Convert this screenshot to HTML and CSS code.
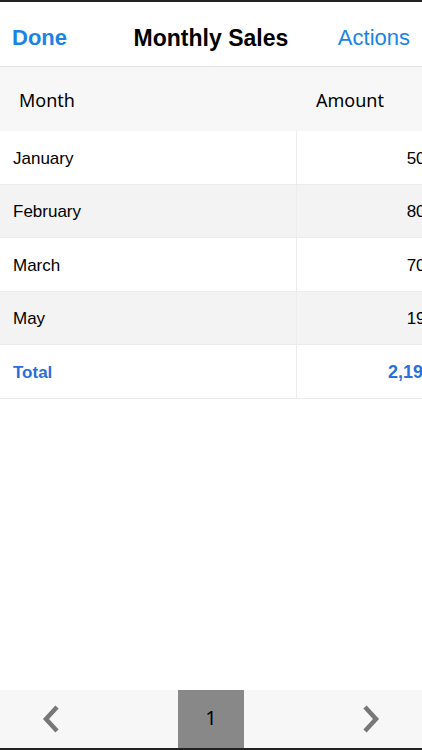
FILE: index.html
```html
<!DOCTYPE html>
<html>
<head>
<meta charset="utf-8">
<link rel="stylesheet" href="styles.css">
</head>
<body>
<div class="screen">
  <div class="topline"></div>
  <header class="nav">
    <span class="nav-btn done">Done</span>
    <span class="nav-title">Monthly Sales</span>
    <span class="nav-btn actions">Actions</span>
  </header>
  <div class="table">
    <div class="row head">
      <div class="cell c1">Month</div>
      <div class="cell c2">Amount</div>
    </div>
    <div class="row">
      <div class="cell c1">January</div>
      <div class="cell c2 num">500</div>
    </div>
    <div class="row alt">
      <div class="cell c1">February</div>
      <div class="cell c2 num">800</div>
    </div>
    <div class="row">
      <div class="cell c1">March</div>
      <div class="cell c2 num">700</div>
    </div>
    <div class="row alt">
      <div class="cell c1">May</div>
      <div class="cell c2 num">190</div>
    </div>
    <div class="row total">
      <div class="cell c1">Total</div>
      <div class="cell c2 num">2,190</div>
    </div>
  </div>
  <div class="spacer"></div>
  <footer class="pager">
    <span class="arrow">
      <svg width="24" height="32" viewBox="0 0 24 32"><path d="M17 4 L6 16 L17 28" fill="none" stroke="#777" stroke-width="4.5" stroke-linecap="butt" stroke-linejoin="miter"/></svg>
    </span>
    <span class="page">1</span>
    <span class="arrow">
      <svg width="24" height="32" viewBox="0 0 24 32"><path d="M7 4 L18 16 L7 28" fill="none" stroke="#777" stroke-width="4.5" stroke-linecap="butt" stroke-linejoin="miter"/></svg>
    </span>
  </footer>
  <div class="bottomline"></div>
</div>
</body>
</html>
```
FILE: styles.css
```css
html, body {
  margin: 0;
  padding: 0;
  background: #fff;
}
.screen {
  width: 422px;
  height: 750px;
  overflow: hidden;
  display: flex;
  flex-direction: column;
  font-family: "Liberation Sans", Arial, sans-serif;
}
.topline {
  height: 2px;
  background: #222;
  flex: none;
}
.nav {
  height: 56px;
  flex: none;
  display: flex;
  align-items: center;
  justify-content: space-between;
  padding: 8px 12px 0 12px;
  border-bottom: 1px solid #e2e2e2;
  box-sizing: content-box;
}
.nav-btn {
  font-size: 22px;
  color: #1a84e6;
}
.done {
  font-weight: bold;
}
.nav-title {
  font-size: 23px;
  font-weight: bold;
  color: #000;
  margin-left: 17px;
}
.table {
  width: 448px;
  flex: none;
}
.row {
  display: grid;
  grid-template-columns: 296px 152px;
  height: 53.5px;
  box-sizing: border-box;
  border-bottom: 1px solid #ececec;
  font-size: 17px;
  color: #000;
}
.row.head {
  height: 64px;
  background: #f7f7f7;
  border-bottom: none;
  font-family: "Noto Sans", "Open Sans", sans-serif;
  font-size: 18px;
}
.row.alt {
  background: #f3f3f3;
}
.cell {
  display: flex;
  align-items: center;
}
.row .c1,
.row .c2 {
  padding-top: 3px;
}
.row.head .c1,
.row.head .c2 {
  padding-top: 2px;
}
.row .c1 {
  padding-left: 13px;
}
.row .c2 {
  border-left: 1px solid #ececec;
}
.row .c2.num {
  justify-content: flex-end;
  padding-right: 13px;
}
.row.total .c2.num {
  padding-right: 15px;
  font-size: 18px;
}
.row.head .c1 {
  padding-left: 19px;
}
.row.head .c2 {
  border-left: none;
  padding-left: 20px;
}
.row.total {
  color: #2b6fdc;
  font-weight: bold;
}
.spacer {
  flex: 1;
}
.pager {
  height: 58px;
  flex: none;
  background: #f7f7f7;
  display: grid;
  grid-template-columns: 178px 66px 178px;
  align-items: stretch;
}
.arrow {
  display: flex;
  align-items: center;
  justify-content: center;
}
.arrow:first-child {
  justify-content: flex-start;
  padding-left: 40px;
}
.arrow:last-child {
  justify-content: flex-end;
  padding-right: 40px;
}
.page {
  background: #888;
  display: flex;
  align-items: center;
  justify-content: center;
  padding-bottom: 3px;
  font-family: "Noto Sans", "Open Sans", sans-serif;
  font-size: 20px;
  color: #000;
}
.bottomline {
  height: 2px;
  background: #222;
  flex: none;
}
```
